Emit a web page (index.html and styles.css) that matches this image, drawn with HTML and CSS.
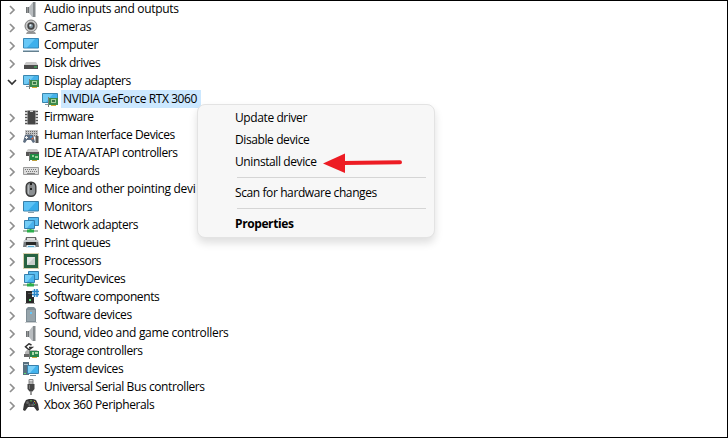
FILE: index.html
```
<!DOCTYPE html>
<html lang="en">
	<head>
		<meta charset="utf-8">
		<title>Device Manager</title>
		<link rel="stylesheet" href="styles.css">
	</head>
	<body>
		<svg class="defs">
			<symbol id="chevron" viewBox="0 0 8 10"><path d="M2 1l4 4-4 4" fill="none" stroke="#8f8f8f" stroke-width="1.7"/></symbol>
			<symbol id="chevron-open" viewBox="0 0 10 8"><path d="M1 2l4 4 4-4" fill="none" stroke="#333" stroke-width="1.7"/></symbol>
			<symbol id="speaker" viewBox="0 0 16 16">
				<path d="M3 6h3v6H3z" fill="#6d7275"/>
				<path d="M6 6l4-5v16l-4-5z" fill="#b9bdc0"/>
				<path d="M10 1h2.500v15H10z" fill="#858a8d"/>
				<path d="M4.500 6v6" stroke="#999"/>
			</symbol>
			<symbol id="camera" viewBox="0 0 16 16">
				<path d="M4 13h8l1 2H3z" fill="#999"/>
				<circle cx="8" cy="7" r="6" fill="#c7c7c7" stroke="#7d7d7d"/>
				<circle cx="8" cy="7" r="3.7" fill="#444"/>
				<circle cx="8" cy="7" r="2" fill="#8295a0"/>
				<circle cx="7.4" cy="6.3" r="1" fill="#e8f0f5"/>
			</symbol>
			<symbol id="computer" viewBox="0 0 16 16">
				<path d="M.5 1.500h15v9.500H.5z" fill="#3fb0ec" stroke="#3987b5"/>
				<path d="M1 2h11l-8 8.500H1z" fill="#68c8f7"/>
				<path d="M0 13h16v2H0z" fill="#a9c0cf"/>
				<path d="M0 14.500h16" stroke="#64808f"/>
			</symbol>
			<symbol id="disk" viewBox="0 0 16 16">
				<path d="M3 7h10l2 3H1z" fill="#c9c9c9"/>
				<path d="M1 10h14v4H1z" fill="#4b4b4b"/>
				<path d="M11 12h3" stroke="#3fd060"/>
			</symbol>
			<symbol id="display" viewBox="0 0 16 16">
				<path d="M.5 2.500h15v9H.5z" fill="#45b2ea" stroke="#3a86ae"/>
				<path d="M1 3h10l-7 8H1z" fill="#70caf4"/>
				<path d="M3 13.500h4" stroke="#8198a5"/>
				<path d="M7 7h9v7H7z" fill="#3c8b4c"/>
				<path d="M6.500 6v10" stroke="#798079"/>
				<path d="M9 8h5v4H9z" fill="#a4d09c"/>
				<path d="M10 9h3v2h-3z" fill="#397547"/>
				<path d="M9 14.500h5" stroke="#d5ad35"/>
			</symbol>
			<symbol id="firmware" viewBox="0 0 16 16">
				<path d="M4.500 1.500h8v14h-8z" fill="#454545"/>
				<path d="M2 2.500h2.500M2 5.500h2.500M2 8.500h2.500M2 11.500h2.500M2 14.500h2.500M12.500 2.500H15M12.500 5.500H15M12.500 8.500H15M12.500 11.500H15M12.500 14.500H15" stroke="#555" stroke-width="1.400"/>
				<path d="M7 1.500h3V3H7z" fill="#ccc"/>
			</symbol>
			<symbol id="hid" viewBox="0 0 16 16">
				<path d="M2 3h13v7H2z" fill="#c4c4c4"/>
				<path d="M3 4.500h12M3 6.500h12M3 8.500h12" stroke="#6b6b6b" stroke-dasharray="1 1"/>
				<path d="M2 8q4-1 8 0l2 7-2 1-2-3H4l-2 3-2-1z" fill="#5d6d80"/>
				<path d="M2 10.500h3M3.500 9v3" stroke="#eee"/>
				<circle cx="8" cy="10" r="1" fill="#3e9cec"/><circle cx="9.500" cy="11.500" r="1" fill="#d56c49"/>
				<path d="M14 9v7" stroke="#555" stroke-width="3"/>
			</symbol>
			<symbol id="ide" viewBox="0 0 16 16">
				<path d="M5 4h9l2 3H3z" fill="#c9c9c9"/>
				<path d="M3 7h13v4H3z" fill="#555"/>
				<path d="M7 9h9v6H7z" fill="#1e8b43"/>
				<path d="M6.500 8v8" stroke="#737b75"/>
				<path d="M9 10h2v2H9zM12 11h3v2h-3z" fill="#95cf98"/>
				<path d="M9 15.500h5" stroke="#bc9e3b"/>
			</symbol>
			<symbol id="keyboard" viewBox="0 0 16 16">
				<path d="M.5 4.500h15v7H.5z" fill="#ddd" stroke="#999"/>
				<path d="M2 6.500h12M3 8.500h11" stroke="#777" stroke-dasharray="1 1"/>
				<path d="M4 10.500h8" stroke="#888"/>
			</symbol>
			<symbol id="mouse" viewBox="0 0 16 16">
				<rect x="3.200" y="1.200" width="9.600" height="14" rx="4.500" fill="#8b8f92" stroke="#3a3a3a" stroke-width="1.400"/>
				<path d="M5.500 4v9" stroke="#b4b8ba"/>
				<path d="M8 2v7" stroke="#222" stroke-width="2"/><path d="M8 4v3" stroke="#ddd"/>
			</symbol>
			<symbol id="monitor" viewBox="0 0 16 16">
				<path d="M.5 2.500h15v9.500H.5z" fill="#38acea" stroke="#397fa8"/>
				<path d="M1 3h12l-8 8.500H1z" fill="#5dc2f5"/>
				<path d="M5 13.500h6" stroke="#8aa0ac"/>
			</symbol>
			<symbol id="network" viewBox="0 0 16 16">
				<path d="M5.500 .5h10v8h-10z" fill="#5abdf0" stroke="#347fae"/>
				<path d="M1.500 3.500h10v8h-10z" fill="#48b2ed" stroke="#347fae"/>
				<path d="M2 4h8l-6 7H2z" fill="#74cdf7"/>
				<path d="M0 14h15" stroke="#a7bcac" stroke-width="2"/>
				<path d="M4 14h7" stroke="#2baf4b" stroke-width="3"/><path d="M7.500 12v2" stroke="#2baf4b" stroke-width="2"/>
			</symbol>
			<symbol id="printer" viewBox="0 0 16 16">
				<path d="M3 2h10l1 4H2z" fill="#666"/><path d="M4 3h8v2H4z" fill="#ddd"/>
				<path d="M1 5h14l1 7H0z" fill="#777b7e"/>
				<path d="M1 5h14v2H1z" fill="#c8cccf"/>
				<path d="M3 7h10v3H3z" fill="#292929"/>
				<path d="M4 10h8l1 3H3z" fill="#dbeaf2"/><path d="M5 11.500h6" stroke="#55a9d1"/>
			</symbol>
			<symbol id="processor" viewBox="0 0 16 16">
				<path d="M1 1h14v14H1z" fill="#286341"/>
				<path d="M.5 .5h15v15H.5z" fill="none" stroke="#b3a55e" stroke-dasharray="1 1"/>
				<path d="M4 4h8v8H4z" fill="#e3e7e5"/><path d="M4 12l8-8v8z" fill="#c8cecb"/>
			</symbol>
			<symbol id="component" viewBox="0 0 16 16">
				<path d="M3 2h8v12H3z" fill="#292929"/><path d="M5 4.500h4" stroke="#555"/>
				<path d="M6 10h2v2H6z" fill="#58e377"/>
				<path d="M2 14.500h10" stroke="#aaa"/>
				<path d="M9 0h7v8H9z" fill="#fff"/>
				<path d="M11.500 0v8M14 0v8M9 2.500h7M9 5.500h7" stroke="#2685c7" stroke-width="1.500"/>
			</symbol>
			<symbol id="software" viewBox="0 0 16 16">
				<path d="M5 0h6l2 2v13H3V2z" fill="#7e8c94"/>
				<path d="M4 3h8v11H4z" fill="#97a5ac"/>
				<path d="M7 5h2v2H7z" fill="#63c9fc"/>
				<path d="M2 15.500h12" stroke="#c9cdcf"/>
			</symbol>
			<symbol id="storage" viewBox="0 0 16 16">
				<path d="M8.500 2L6 .8 2.500 3.800l3.500 3L9 4.500H6" fill="none" stroke="#333" stroke-width="1.500"/>
				<path d="M2 9l2-2h10l2 3v3H2z" fill="#b5b5b5"/><path d="M1 11h6v3H1z" fill="#666"/>
				<path d="M7 8h9v6H7z" fill="#28854b"/><path d="M6.500 7v9" stroke="#717b75"/>
				<path d="M9 9h2v3H9zM12 9h3v2h-3z" fill="#b1dbad"/><path d="M9 14.500h5" stroke="#cda943"/>
			</symbol>
			<symbol id="system" viewBox="0 0 16 16">
				<path d="M0 1h6v13H0z" fill="#587180"/><path d="M1 3.500h4" stroke="#b4c8d2"/><path d="M1 12.500h2" stroke="#60e078"/>
				<path d="M4.500 4.500h11v8h-11z" fill="#43b3ed" stroke="#3981ac"/><path d="M5 5h8l-6 7H5z" fill="#7bd0f8"/>
				<path d="M7 14.500h6" stroke="#78909d"/>
			</symbol>
			<symbol id="usb" viewBox="0 0 16 16">
				<path d="M6 .5h4V5H6z" fill="#ddd" stroke="#888"/><path d="M7 2v2M9 2v2" stroke="#666" stroke-width=".7"/>
				<path d="M4.500 5h7v5l-2 2.500h-3l-2-2.500z" fill="#454545"/>
				<path d="M8 12v4" stroke="#777" stroke-width="1.500"/><path d="M6.500 6v4" stroke="#777"/>
			</symbol>
			<symbol id="gamepad" viewBox="0 0 16 16">
				<path d="M3 3l3-1h4l3 1 2 4 1 6-2 1-3-4H5l-3 4-2-1 1-6z" fill="#353535"/>
				<circle cx="4.500" cy="5.500" r="1.500" fill="#666"/><circle cx="9.500" cy="8" r="1.300" fill="#666"/>
				<path d="M5 8h3M6.500 6.500v3" stroke="#606060"/>
				<path d="M7.500 3h1v1.500h-1z" fill="#5bdb55"/>
				<path d="M11 4.500h1" stroke="#d7b13b"/><path d="M12 6h1" stroke="#d75439"/><path d="M10 6h1" stroke="#4089cf"/><path d="M11 7.500h1" stroke="#45a955"/>
			</symbol>
		</svg>
		<div class="window">
			<ul class="tree">
				<li><svg class="arrow"><use href="#chevron"/></svg><svg class="icon"><use href="#speaker"/></svg><span>Audio inputs and outputs</span></li>
				<li><svg class="arrow"><use href="#chevron"/></svg><svg class="icon"><use href="#camera"/></svg><span>Cameras</span></li>
				<li><svg class="arrow"><use href="#chevron"/></svg><svg class="icon"><use href="#computer"/></svg><span>Computer</span></li>
				<li><svg class="arrow"><use href="#chevron"/></svg><svg class="icon"><use href="#disk"/></svg><span class="tight">Disk drives</span></li>
				<li><svg class="arrow open"><use href="#chevron-open"/></svg><svg class="icon"><use href="#display"/></svg><span class="tight">Display adapters</span></li>
				<li class="child"><svg class="icon"><use href="#display"/></svg><span class="selected">NVIDIA GeForce RTX 3060</span></li>
				<li><svg class="arrow"><use href="#chevron"/></svg><svg class="icon"><use href="#firmware"/></svg><span class="tight">Firmware</span></li>
				<li><svg class="arrow"><use href="#chevron"/></svg><svg class="icon"><use href="#hid"/></svg><span class="tight">Human Interface Devices</span></li>
				<li><svg class="arrow"><use href="#chevron"/></svg><svg class="icon"><use href="#ide"/></svg><span class="tight">IDE ATA/ATAPI controllers</span></li>
				<li><svg class="arrow"><use href="#chevron"/></svg><svg class="icon"><use href="#keyboard"/></svg><span class="tight">Keyboards</span></li>
				<li><svg class="arrow"><use href="#chevron"/></svg><svg class="icon"><use href="#mouse"/></svg><span>Mice and other pointing devi</span></li>
				<li><svg class="arrow"><use href="#chevron"/></svg><svg class="icon"><use href="#monitor"/></svg><span>Monitors</span></li>
				<li><svg class="arrow"><use href="#chevron"/></svg><svg class="icon"><use href="#network"/></svg><span class="tight">Network adapters</span></li>
				<li><svg class="arrow"><use href="#chevron"/></svg><svg class="icon"><use href="#printer"/></svg><span class="tight">Print queues</span></li>
				<li><svg class="arrow"><use href="#chevron"/></svg><svg class="icon"><use href="#processor"/></svg><span class="tight">Processors</span></li>
				<li><svg class="arrow"><use href="#chevron"/></svg><svg class="icon"><use href="#network"/></svg><span class="tight">SecurityDevices</span></li>
				<li><svg class="arrow"><use href="#chevron"/></svg><svg class="icon"><use href="#component"/></svg><span class="tight">Software components</span></li>
				<li><svg class="arrow"><use href="#chevron"/></svg><svg class="icon"><use href="#software"/></svg><span class="tight">Software devices</span></li>
				<li><svg class="arrow"><use href="#chevron"/></svg><svg class="icon"><use href="#speaker"/></svg><span>Sound, video and game controllers</span></li>
				<li><svg class="arrow"><use href="#chevron"/></svg><svg class="icon"><use href="#storage"/></svg><span class="tight">Storage controllers</span></li>
				<li><svg class="arrow"><use href="#chevron"/></svg><svg class="icon"><use href="#system"/></svg><span class="tight">System devices</span></li>
				<li><svg class="arrow"><use href="#chevron"/></svg><svg class="icon"><use href="#usb"/></svg><span class="tight">Universal Serial Bus controllers</span></li>
				<li><svg class="arrow"><use href="#chevron"/></svg><svg class="icon"><use href="#gamepad"/></svg><span class="tight">Xbox 360 Peripherals</span></li>
			</ul>
			<div class="menu">
				<div class="item">Update driver</div>
				<div class="item">Disable device</div>
				<div class="item">Uninstall device</div>
				<div class="line"></div>
				<div class="item">Scan for hardware changes</div>
				<div class="line"></div>
				<div class="item bold">Properties</div>
				<svg class="pointer" viewBox="0 0 80 20"><path d="M20 10l57-.8" stroke="#ed1c24" stroke-width="4" stroke-linecap="round"/><path d="M0 10.500L22 .5v19.500z" fill="#ed1c24"/></svg>
			</div>
		</div>
	</body>
</html>
```
FILE: styles.css
```
*{
	margin: 0;
	padding: 0;
	box-sizing: border-box;
}
body{
	font-family: "Open Sans", "Noto Sans", sans-serif;
	font-size: 12px;
	letter-spacing: -0.3px;
	color: #000;
	background: #fff;
}
.defs{
	display: none;
}
.window{
	position: relative;
	width: 728px;
	height: 438px;
	border: 1px solid #000;
	overflow: hidden;
}
.tree{
	list-style: none;
	margin-top: -1px;
	padding-left: 7px;
}
.tree li{
	display: flex;
	align-items: center;
	height: 18px;
	line-height: 18px;
	white-space: nowrap;
}
.arrow{
	width: 8px;
	height: 10px;
	margin: 2px 7px 0 0;
}
.arrow.open{
	width: 10px;
	height: 8px;
	margin: 2px 6px 0 -1px;
}
.icon{
	width: 16px;
	height: 16px;
	margin-right: 5px;
}
.tight{
	letter-spacing: -0.4px;
}
.tree .child{
	padding-left: 34px;
}
.child .icon{
	margin-right: 3px;
}
.selected{
	height: 18px;
	padding: 0 4px 0 2px;
	background: #cce8ff;
	letter-spacing: -0.4px;
}
.menu{
	position: absolute;
	left: 196px;
	top: 103px;
	width: 238px;
	height: 134px;
	padding: 2px 8px 0 37px;
	background: #f7f7f7;
	border: 1px solid #e3e3e3;
	border-radius: 8px;
	box-shadow: 0 5px 8px rgba(0,0,0,0.13);
	letter-spacing: -0.4px;
}
.item{
	height: 22px;
	line-height: 22px;
	white-space: nowrap;
}
.line{
	height: 1px;
	margin: 4px 0 4px 2px;
	background: #d5d5d5;
}
.bold{
	font-weight: bold;
}
.pointer{
	position: absolute;
	left: 125px;
	top: 48px;
	width: 80px;
	height: 20px;
}
```
